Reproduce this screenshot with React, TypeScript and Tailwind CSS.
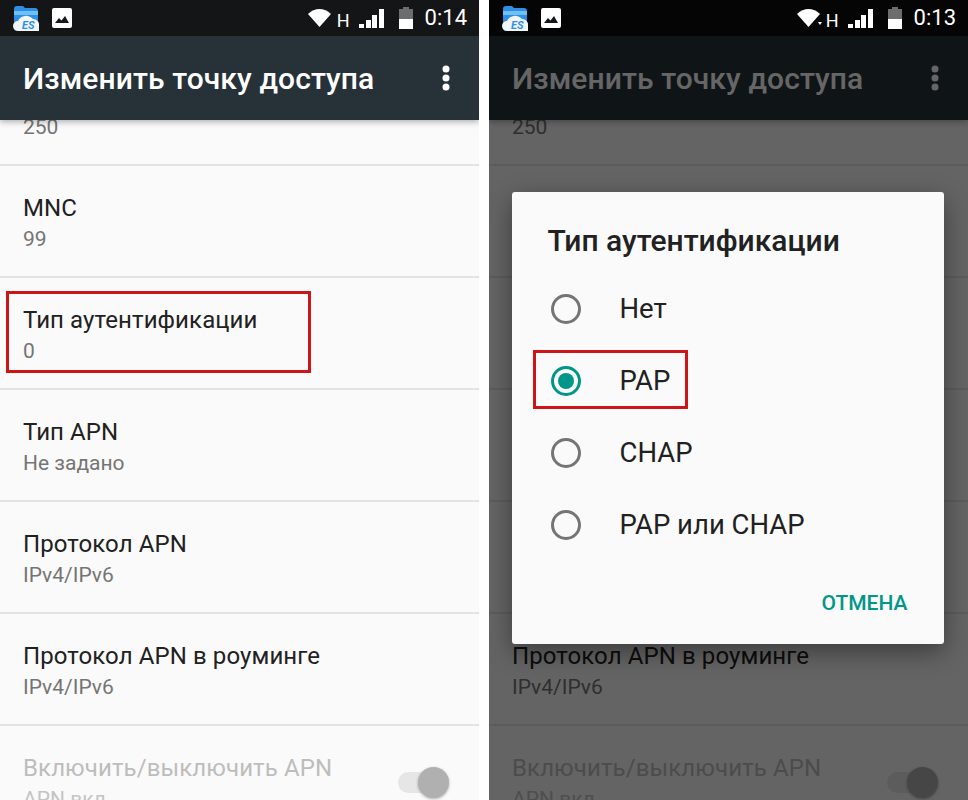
import React from "react";

const font = { fontFamily: "Roboto, sans-serif" };

const rows = [
  { title: "MNC", value: "99" },
  { title: "Тип аутентификации", value: "0" },
  { title: "Тип APN", value: "Не задано" },
  { title: "Протокол APN", value: "IPv4/IPv6" },
  { title: "Протокол APN в роуминге", value: "IPv4/IPv6" },
];

function EsIcon() {
  return (
    <svg width="26" height="25" viewBox="0 0 26 25">
      <path d="M1 3a3 3 0 0 1 3-3h6l2 2h10a3 3 0 0 1 3 3v17a3 3 0 0 1-3 3H4a3 3 0 0 1-3-3z" fill="#2f8fe6" />
      <path d="M1 5h24v4H1z" fill="#6fc0f5" />
      <path d="M5 25a5 5 0 0 1 0-10 9 9 0 0 1 15-2 6 6 0 0 1 6 7v5z" fill="#f2f6f9" />
      <text x="9" y="23" fontSize="11" fontWeight="700" fontStyle="italic" fill="#2f8fe6" fontFamily="Roboto, sans-serif">ES</text>
    </svg>
  );
}

function ImageIcon() {
  return (
    <svg width="20" height="20" viewBox="0 0 20 20">
      <rect width="20" height="20" rx="2" fill="#fff" />
      <path d="M3 15l4-5 2.500 2.500L13 8l4 7z" fill="#15181a" />
    </svg>
  );
}

function StatusIcons({ time, sync }: { time: string; sync: boolean }) {
  return (
    <div className="ml-auto flex items-center text-white">
      <svg width="26" height="18" viewBox="0 0 26 18">
        <path d="M0 5C3.500 1.800 7.500 0 11.500 0S19.500 1.800 23 5L11.500 18z" fill="#fff" />
        {sync && <path d="M21 13h4l-2 3z" fill="#fff" />}
      </svg>
      <span className="ml-[3px] mt-[5px] text-[18px] leading-none">H</span>
      <svg className="ml-[9px]" width="25" height="19" viewBox="0 0 25 19">
        <path d="M0 15h5v4H0z" fill="#fff" />
        <path d="M7 11h5v8H7z" fill="#fff" />
        <path d="M13 6h5v13h-5z" fill="#fff" />
        <path d="M20 0h5v19h-5z" fill="#fff" />
      </svg>
      <svg className="ml-[15px]" width="14" height="22" viewBox="0 0 14 22">
        <path d="M4 0h6v2h4v20H0V2h4z" fill="#6b6d6e" />
        <path d="M0 12h14v10H0z" fill="#fff" />
      </svg>
      <span className="ml-[12px] text-[22px] leading-none">{time}</span>
    </div>
  );
}

function ListRow({ title, value }: { title: string; value: string }) {
  return (
    <div className="h-[112px] shrink-0 border-b-2 border-[#e3e3e3] pl-[23px] pt-[26px]">
      <div className="text-[24px] leading-[32px] tracking-[0.1px] text-[#212121]">{title}</div>
      <div className="text-[21px] leading-[31px] text-[#757575]">{value}</div>
    </div>
  );
}

function Screen({ time, sync, statusBg, children }: { time: string; sync: boolean; statusBg: string; children?: React.ReactNode }) {
  return (
    <div className="relative flex h-[800px] w-[479px] shrink-0 flex-col overflow-hidden bg-[#fafafa]">
      <div className={`relative z-20 flex h-[36px] shrink-0 items-center pl-[13px] pr-[12px] ${statusBg}`}>
        <EsIcon />
        <div className="ml-[13px]">
          <ImageIcon />
        </div>
        <StatusIcons time={time} sync={sync} />
      </div>
      <div className="relative flex min-h-0 flex-1 flex-col">
        <div className="relative z-10 flex h-[84px] shrink-0 items-center justify-between bg-[#263238] pl-[23px] pr-[27px] shadow-[0_2px_6px_rgba(0,0,0,0.3)]">
          <span className="pt-[2px] text-[30px] font-medium leading-none tracking-[0.1px] text-white">Изменить точку доступа</span>
          <svg width="12" height="26" viewBox="0 0 12 26" fill="#fff">
            <circle cx="6" cy="4" r="3.500" />
            <circle cx="6" cy="13" r="3.500" />
            <circle cx="6" cy="22" r="3.500" />
          </svg>
        </div>
        <div className="flex h-[46px] shrink-0 flex-col justify-end border-b-2 border-[#e3e3e3] pb-[22px] pl-[23px] text-[21px] leading-[30px] text-[#757575]">
          250
        </div>
        {rows.map((row) => (
          <ListRow key={row.title} title={row.title} value={row.value} />
        ))}
        <div className="flex h-[112px] shrink-0 items-center justify-between pl-[23px] pr-[45px]">
          <div className="self-start pt-[26px]">
            <div className="text-[24px] leading-[32px] tracking-[0.1px] text-[#bdbdbd]">Включить/выключить APN</div>
            <div className="text-[21px] leading-[31px] text-[#c4c4c4]">APN вкл.</div>
          </div>
          <div className="relative h-[21px] w-[36px] rounded-full bg-[#e6e6e6]">
            <div className="absolute right-[-15px] top-[-5px] h-[31px] w-[31px] rounded-full bg-[#b0b0b0] shadow-[0_1px_3px_rgba(0,0,0,0.3)]" />
          </div>
        </div>
        {children}
      </div>
    </div>
  );
}

function Radio({ checked }: { checked: boolean }) {
  return (
    <div className={`flex h-[30px] w-[30px] items-center justify-center rounded-full border-[3px] ${checked ? "border-[#009688]" : "border-[#757575]"}`}>
      {checked && <div className="h-[16px] w-[16px] rounded-full bg-[#009688]" />}
    </div>
  );
}

const options = ["Нет", "PAP", "CHAP", "PAP или CHAP"];

export default function App() {
  return (
    <div className="relative flex h-[800px] w-[968px] gap-[10px] overflow-hidden bg-white" style={font}>
      <Screen time="0:14" sync={false} statusBg="bg-[#131517]">
        <div className="absolute left-[6px] top-[255px] z-10 h-[82px] w-[305px] border-[3px] border-[#cc1419]" />
      </Screen>
      <Screen time="0:13" sync={true} statusBg="bg-[#050505]">
        <div className="absolute inset-0 z-10 flex items-start justify-center bg-black/60 pt-[156px]">
          <div className="relative ml-[-2px] flex h-[452px] w-[432px] flex-col rounded-[3px] bg-[#fafafa] shadow-[0_8px_24px_rgba(0,0,0,0.4)]">
            <div className="pl-[36px] pt-[32px] text-[30px] font-medium leading-[34px] text-[#212121]">Тип аутентификации</div>
            <div className="mt-[15px] flex flex-col">
              {options.map((option, i) => (
                <div key={option} className="flex h-[72px] items-center pl-[39px]">
                  <Radio checked={i === 1} />
                  <span className="ml-[39px] text-[27.5px] text-[#212121]">{option}</span>
                </div>
              ))}
            </div>
            <div className="mt-auto pb-[28px] pr-[36px] text-right text-[21px] font-medium leading-[26px] text-[#009688]">ОТМЕНА</div>
            <div className="absolute left-[21px] top-[158px] h-[59px] w-[155px] border-[3px] border-[#cc1419]" />
          </div>
        </div>
      </Screen>
    </div>
  );
}
